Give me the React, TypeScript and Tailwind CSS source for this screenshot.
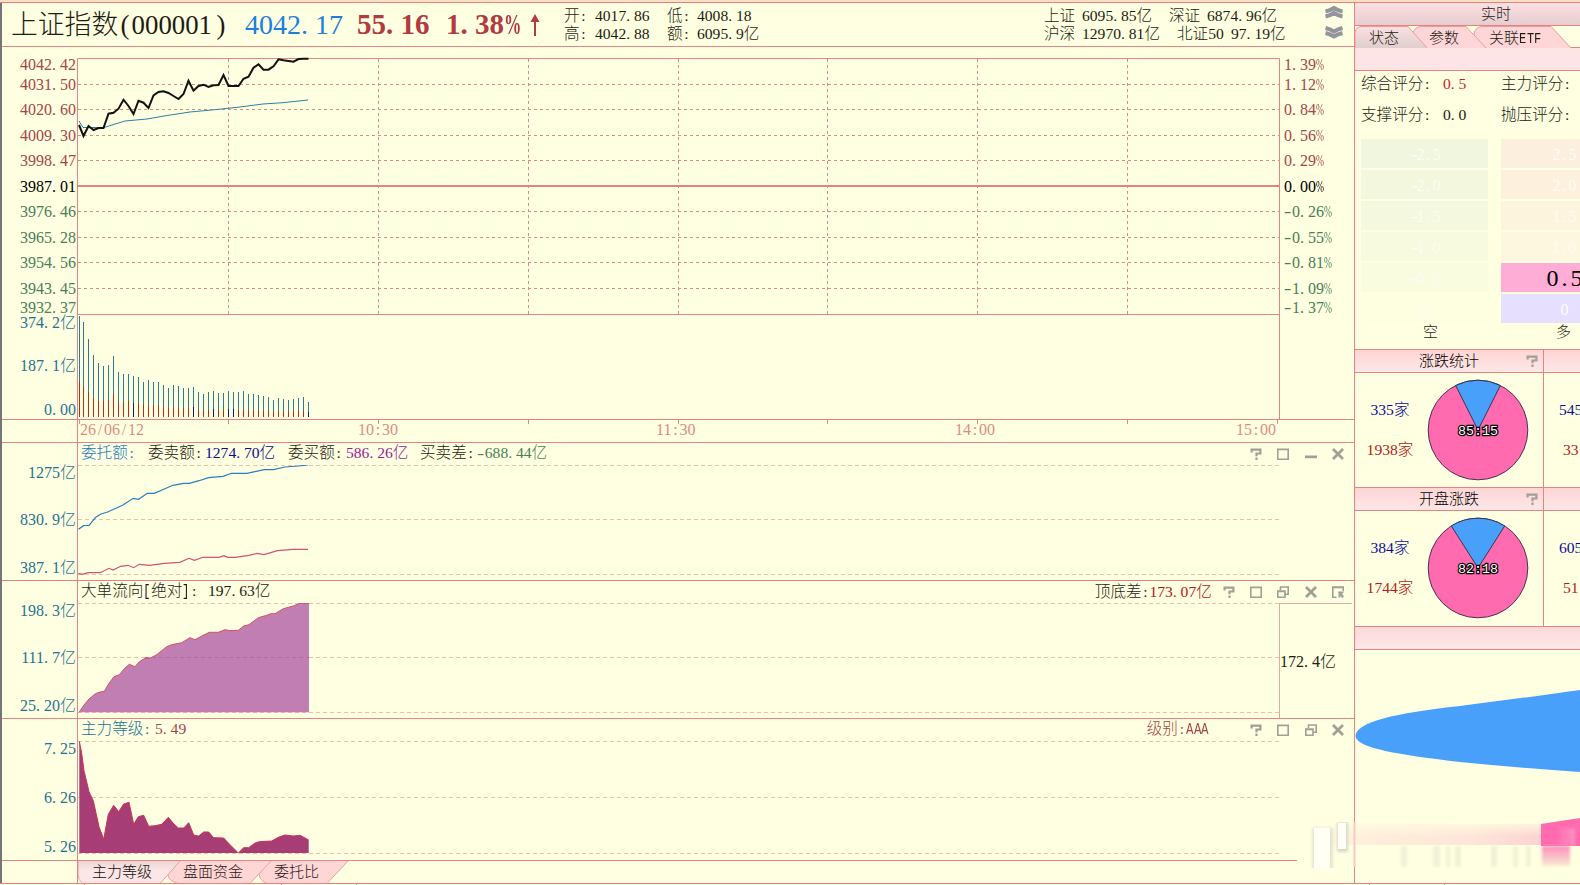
import { Fragment, ReactNode } from "react";
import clsx from "clsx";

type Label = { text: string; y: number; className?: string };
type Point = [number, number];

const RED = "text-[#a5464a]";
const GREEN = "text-[#4a7d5a]";
const TEAL = "text-[#1f7391]";

const leftLabels: Label[] = [
  { text: "4042.42", y: 65, className: RED },
  { text: "4031.50", y: 85, className: RED },
  { text: "4020.60", y: 110, className: RED },
  { text: "4009.30", y: 136, className: RED },
  { text: "3998.47", y: 161, className: RED },
  { text: "3987.01", y: 187, className: "text-black" },
  { text: "3976.46", y: 212, className: GREEN },
  { text: "3965.28", y: 238, className: GREEN },
  { text: "3954.56", y: 263, className: GREEN },
  { text: "3943.45", y: 289, className: GREEN },
  { text: "3932.37", y: 308, className: GREEN },
  { text: "374.2亿", y: 323, className: TEAL },
  { text: "187.1亿", y: 366, className: TEAL },
  { text: "0.00", y: 410, className: TEAL },
];

const rightLabels: Label[] = [
  { text: "1.39%", y: 65, className: RED },
  { text: "1.12%", y: 85, className: RED },
  { text: "0.84%", y: 110, className: RED },
  { text: "0.56%", y: 136, className: RED },
  { text: "0.29%", y: 161, className: RED },
  { text: "0.00%", y: 187, className: "text-black" },
  { text: "-0.26%", y: 212, className: GREEN },
  { text: "-0.55%", y: 238, className: GREEN },
  { text: "-0.81%", y: 263, className: GREEN },
  { text: "-1.09%", y: 289, className: GREEN },
  { text: "-1.37%", y: 308, className: GREEN },
];

const gridRows = [84, 109, 135, 160, 211, 237, 262, 288];
const gridCols = [228, 378, 528, 678, 827, 977, 1127];

const price = [
  125, 136, 126, 130, 128, 128, 113.7, 112.7, 108.7, 99.7, 106, 114, 100.7,
  102.7, 108, 95.3, 92, 91.3, 93, 96, 99, 94, 80.7, 90.7, 86, 84.7, 87, 85.3,
  85, 75, 86, 86, 86, 78.7, 76.7, 67.7, 64.3, 69.7, 69.7, 66.3, 59.3, 60.3, 61,
  61.7, 59, 58.7, 58.7,
];

const average =
  "79,121 83,127.5 104,127.5 125,121 147,119 167,115.5 190,112 217,109.5 240,107 263,104 283,102.7 308,100";

const volumes = [
  101, 95, 78, 62, 54, 51, 52, 61, 45, 43, 43, 41, 40, 35, 37, 35, 35, 32, 29,
  32, 31, 29, 29, 30, 25, 23, 25, 26, 24, 24, 26, 25, 25, 26, 23, 23, 22, 21,
  20, 17, 19, 18, 17, 18, 19, 20, 15,
];

const inner = [
  36, 30, 25, 19, 16, 16, 17, 23, 15, 15, 16, 14, 13, 12, 11, 12, 12, 10, 9, 10,
  9, 9, 9, 10, 7, 7, 7, 8, 7, 7, 8, 8, 7, 7, 6, 6, 6, 6, 6, 5, 6, 5, 5, 6, 6, 6,
  5,
];

const navyBars = [11, 23, 27, 30, 31, 46];

const sellLine =
  "78.5,529.3 83.5,525.7 89,525.3 95.7,517.3 101,514 107,512.3 114.8,508.7 122.5,505.3 133.2,498.3 138.5,499.3 147.3,493.3 154.2,493.3 168.4,487.3 173,485.3 183.7,483.3 189.4,483.3 199,480.7 208.6,477.7 223,476.3 231.5,473.3 246.8,473.3 264,469.7 273.6,469.7 285,467 298.5,466 308,465";
const buyLine =
  "78.5,573.3 82.3,574.3 88,572.7 100.3,572.7 109,568.3 113,570 120.6,566.3 128.2,565.3 133.6,567.7 139.3,564.3 149.3,565.3 164.6,563.3 179.9,562.3 189,558.3 194.4,560.3 202.8,557.3 218.9,557.3 223.9,555.7 227.7,557.3 235.4,557.3 248.8,555.3 257.2,553.3 264,554.7 277.5,550.7 292.8,549.3 308,549.3";
const flowLine =
  "79,712.3 84,705 89,699 95,694 99,692.3 104.3,691.3 109,683.3 114,676.7 119.3,674.7 125,668 129.3,664.3 135,666.7 139.3,661.7 145,658.3 150,658.3 156.7,654.7 166.7,646.7 171.7,644.7 181.7,642.7 190,637.7 195,639.7 201.7,636 209.3,632.3 218.3,632.3 225,629.7 230,630.7 238.3,630.3 243.7,626 249,624.7 258.3,617.7 266.7,615.3 270.7,613.7 275,613.7 283.3,608.7 293.3,606 300,603.3 309,603.3";
const levelLine =
  "79.3,741.3 81.7,753.3 84,770.7 89,791.7 93.3,800.7 99,826.7 103.7,839.3 108.3,814.3 113.7,805.3 118.7,811.7 123.7,804 129,802.3 133.7,824.3 138.3,816.7 143.7,815.3 148.7,826.3 155,825.7 161.7,824.3 168.3,817.3 173.3,823.3 178.3,828 183.7,828 188.7,822.7 193.7,835 198.7,836 203.7,832 208.7,832 213.7,837.7 223.7,838 230,844.7 238.3,853 243.7,847.7 248.7,847.7 255,843 259.3,841.7 271.7,841 278.3,837.3 285,835 293.3,836 300,835.3 308.7,840";

const minuteX = (i: number) => (i === 0 ? 79 : 78.5 + 5 * i);

// Half-width text: digits are already 0.5em wide, everything else is boxed to it.
const T = ({ children }: { children: string }) => (
  <>
    {children.split(/([.:()/\-]|[%A-Z[\]])/).map((part, i) => {
      if (/^[A-Z[\]]$/.test(part))
        return (
          <span
            key={i}
            className="inline-block w-[0.5em] origin-left scale-x-80 font-['Liberation_Mono',monospace] leading-none"
          >
            {part}
          </span>
        );
      if (part === "%")
        return (
          <span key={i} className="inline-block w-[0.5em] origin-left scale-x-60">
            {part}
          </span>
        );
      if (part === "-")
        return (
          <span key={i} className="inline-block w-[0.5em] origin-left scale-x-140">
            {part}
          </span>
        );
      if (/^[.:()/]$/.test(part))
        return (
          <span
            key={i}
            className={clsx(
              "inline-block w-[0.5em]",
              part === ")" && "text-right",
              /[:(/]/.test(part) && "text-center"
            )}
          >
            {part}
          </span>
        );
      return <Fragment key={i}>{part}</Fragment>;
    })}
  </>
);

const Axis = ({
  labels,
  top,
  className,
}: {
  labels: Label[];
  top: number;
  className?: string;
}) => (
  <div className={clsx("flex flex-col text-[16px] leading-[18px] whitespace-nowrap", className)}>
    {labels.map(({ text, y, className }, i) => {
      const prev = i === 0 ? top : labels[i - 1].y + 9;
      return (
        <span key={text} className={clsx("h-[18px] shrink-0", className)} style={{ marginTop: y - 9 - prev }}>
          <T>{text}</T>
        </span>
      );
    })}
  </div>
);

const HelpIcon = () => (
  <svg width="12" height="12" viewBox="0 0 12 12" fill="none" stroke="#a0a096" strokeWidth="2.2">
    <path d="M1.6 4.5V1.6H10.4V5.5H6.5V8.3M6.5 9.6V12" />
  </svg>
);

const MaxIcon = () => (
  <svg width="12" height="12" viewBox="0 0 12 12" fill="none" stroke="#a0a096" strokeWidth="1.6">
    <path d="M.8 1.5H11.2V11.2H.8ZM0 1.2H12" />
  </svg>
);

const MinIcon = () => (
  <svg width="12" height="12" viewBox="0 0 12 12">
    <path d="M0 7.5H12V10.2H0Z" fill="#a0a096" />
  </svg>
);

const RestoreIcon = () => (
  <svg width="12" height="12" viewBox="0 0 12 12" fill="none" stroke="#a0a096" strokeWidth="1.6">
    <path d="M3.5 4V1H11.2V8.2H8.5M.8 5H8V11.2H.8ZM.8 5.5H8" />
  </svg>
);

const CloseIcon = () => (
  <svg width="12" height="12" viewBox="0 0 12 12" stroke="#a0a096" strokeWidth="2.8">
    <path d="M1 1L11 11M11 1L1 11" />
  </svg>
);

const PopIcon = () => (
  <svg width="12" height="12" viewBox="0 0 12 12" fill="none" stroke="#a0a096" strokeWidth="1.6">
    <path d="M4.5 11.2H.8V1H11.2V5M0 1.5H12" />
    <path d="M6 6H11.5L9.5 7.8L11.5 10.5L10 11.5L8.5 9.5L7 11.5V6" fill="#a0a096" strokeWidth="1" />
  </svg>
);

const Toolbar = ({ children }: { children: ReactNode }) => (
  <div className="flex h-[22px] items-center gap-[15.3px] pr-2.5">{children}</div>
);

const DashedRows = ({ rows, to = 1279 }: { rows: number[]; to?: number }) => (
  <g stroke="#e9bfae" strokeDasharray="4 3">
    {rows.map((y) => (
      <path key={y} d={`M78 ${y}.5H${to}`} />
    ))}
  </g>
);

const Pane = ({
  labels,
  top,
  height,
  header,
  tools,
  side,
  children,
}: {
  labels: Label[];
  top: number;
  height: number;
  header: ReactNode;
  tools: ReactNode;
  side?: ReactNode;
  children: ReactNode;
}) => (
  <section className="flex shrink-0 border-b border-[#e98383]" style={{ height }}>
    <Axis labels={labels} top={top} className="w-[75px] shrink-0 items-end pr-px" />
    <div className="flex flex-1 flex-col border-l border-[#e98383]">
      <div className="flex h-[22px] items-start justify-between">
        <div className="flex pl-[3px] text-[15.6px] leading-[19px] whitespace-nowrap text-[#1c1c14]">
          {header}
        </div>
        <div className="flex text-[15.6px] leading-[22px]">{tools}</div>
      </div>
      <div className="flex flex-1">
        <svg
          className="w-[1201px] shrink-0"
          height={height - 23}
          viewBox={`78 ${top + 22} 1201 ${height - 23}`}
          fill="none"
        >
          {children}
        </svg>
        {side}
      </div>
    </div>
  </section>
);

const Pie = ({ share, label }: { share: number; label: string }) => {
  const a = share * Math.PI;
  const x = 49.8 * Math.sin(a);
  const y = 49.8 * Math.cos(a);
  return (
    <svg width="102" height="102" viewBox="-51 -51 102 102">
      <circle r="49.8" fill="#ff6bae" stroke="#493050" />
      <path d={`M0 0L${-x} ${-y}A49.8 49.8 0 0 1 ${x} ${-y}Z`} fill="#48a0fa" stroke="#3a3550" />
      <text
        y="5"
        textAnchor="middle"
        fill="#fff"
        stroke="#000"
        strokeWidth="2.5"
        paintOrder="stroke"
        className="font-['Liberation_Mono',monospace] text-[13.3px]"
      >
        {label}
      </text>
    </svg>
  );
};

const StatRow = ({
  title,
  down,
  up,
  share,
  ratio,
  nextDown,
  nextUp,
}: {
  title: string;
  down: string;
  up: string;
  share: number;
  ratio: string;
  nextDown: string;
  nextUp: string;
}) => (
  <div className="flex h-[138px] border-b border-[#e98383] text-[15.6px] leading-5 last:h-[139px]">
    <div className="w-[189px] shrink-0 border-r border-[#e98383]">
      <div className="flex h-[23px] items-center border-b border-[#e98383] bg-gradient-to-b from-[#ffd5d5] to-[#fde7e7]">
        <span className="flex-1 pl-16 text-[15px] whitespace-nowrap text-black">{title}</span>
        <span className="pr-[5px]">
          <HelpIcon />
        </span>
      </div>
      <div className="flex items-center pt-1.5">
        <div className="flex w-[62px] flex-col items-center gap-5 pl-2">
          <span className="text-[#0b0b9c]">{down}</span>
          <span className="text-[#b01c20]">{up}</span>
        </div>
        <div className="pl-[10px]">
          <Pie share={share} label={ratio} />
        </div>
      </div>
    </div>
    <div className="flex-1">
      <div className="h-[23px] border-b border-[#e98383] bg-gradient-to-b from-[#ffd5d5] to-[#fde7e7]" />
      <div className="flex flex-col gap-5 pt-[27px] pl-[15px]">
        <span className="text-[#0b0b9c]">{nextDown}</span>
        <span className="pl-1 text-[#b01c20]">{nextUp}</span>
      </div>
    </div>
  </div>
);

const bears = [
  { text: "-2.5", bg: "bg-[#f1f6de]" },
  { text: "-2.0", bg: "bg-[#f2f7de]" },
  { text: "-1.5", bg: "bg-[#f4f8df]" },
  { text: "-1.0", bg: "bg-[#f7fadf]" },
  { text: "-0.5", bg: "bg-[#f9fcdf]" },
  { text: "0", bg: "bg-[#fefee0]" },
];

const bulls = [
  { text: "2.5", bg: "bg-[#fcefdd]" },
  { text: "2.0", bg: "bg-[#fdf1dd]" },
  { text: "1.5", bg: "bg-[#fdf4de]" },
  { text: "1.0", bg: "bg-[#fef7df]" },
  { text: "0.5", bg: "bg-[#feaed6]" },
  { text: "0", bg: "bg-[#e6dffe]" },
];

const Header = () => (
  <header className="flex h-11 shrink-0 border-b border-[#e98383] text-[#1c1c14]">
    <div className="flex w-[560px] shrink-0 items-center whitespace-nowrap">
      <h1 className="w-[243px] shrink-0 pl-[9px] text-[26.8px] leading-10">
        <T>上证指数(000001)</T>
      </h1>
      <span className="w-[112px] text-[28px] text-[#1c7ee0]">
        <T>4042.17</T>
      </span>
      <span className="w-[89px] text-[29px] font-bold text-[#b23a42]">
        <T>55.16</T>
      </span>
      <span className="w-[84px] text-[29px] font-bold text-[#b23a42]">
        <T>1.38%</T>
      </span>
      <svg width="10" height="22" viewBox="0 0 10 22" fill="#b23a42">
        <path d="M5 0L9.5 8H6V22H4V8H.5Z" />
      </svg>
    </div>
    <div className="flex w-[479px] shrink-0 flex-col pt-[4px] pl-[2px] text-[15.6px] leading-[18px] whitespace-nowrap">
      <div className="flex">
        <span className="w-[31px]"><T>开:</T></span>
        <span className="w-[72px]"><T>4017.86</T></span>
        <span className="w-[30px]"><T>低:</T></span>
        <span><T>4008.18</T></span>
      </div>
      <div className="flex">
        <span className="w-[31px]"><T>高:</T></span>
        <span className="w-[72px]"><T>4042.88</T></span>
        <span className="w-[30px]"><T>额:</T></span>
        <span><T>6095.9亿</T></span>
      </div>
    </div>
    <div className="flex w-[280px] shrink-0 flex-col pt-[4px] pl-[3px] text-[15.6px] leading-[18px] whitespace-nowrap">
      <div className="flex">
        <span className="w-[38px]">上证</span>
        <span className="w-[87px]"><T>6095.85亿</T></span>
        <span className="w-[38px]">深证</span>
        <span><T>6874.96亿</T></span>
      </div>
      <div className="flex">
        <span className="w-[38px]">沪深</span>
        <span className="w-[95px]"><T>12970.81亿</T></span>
        <span className="w-[54px]">北证50</span>
        <span><T>97.19亿</T></span>
      </div>
    </div>
    <svg className="mt-[2px] ml-[3px]" width="20" height="34" viewBox="0 0 20 34" fill="none" stroke="#94949e" strokeWidth="4">
      <path d="M1.5 6.5Q6 5.5 10 3Q14 5.5 18.5 6.5M1.5 11.5Q6 10.5 10 8Q14 10.5 18.5 11.5" />
      <path d="M1.5 23Q6 24 10 26.5Q14 24 18.5 23M1.5 28Q6 29 10 31.5Q14 29 18.5 28" />
    </svg>
  </header>
);

const PriceChart = () => {
  const points: Point[] = price.map((y, i) => [minuteX(i), y]);
  return (
    <section className="flex h-[373px] shrink-0 border-b border-[#e98383]">
      <Axis labels={leftLabels} top={47} className="w-[75px] shrink-0 items-end pr-px" />
      <svg className="shrink-0" width="1203" height="372" viewBox="77 47 1203 372" fill="none">
        <g stroke="#d98d80" strokeDasharray="3 3">
          {gridRows.map((y) => (
            <path key={y} d={`M78 ${y}.5H1279`} />
          ))}
          {gridCols.map((x) => (
            <path key={x} d={`M${x}.5 59V314`} />
          ))}
        </g>
        <path d="M77.5 419V58.5H1279.5V419M77 314.5H1280" stroke="#e98383" />
        <path d="M78 186H1279" stroke="#de8484" strokeWidth="2" />
        <polyline points={average} stroke="#2a83a5" />
        <polyline points={points.join(" ")} stroke="#111" strokeWidth="2" />
        <g shapeRendering="crispEdges">
          {volumes.map((v, i) => {
            const x = Math.floor(minuteX(i));
            return (
              <Fragment key={i}>
                <rect x={x} y={417 - v} width="1" height={v} fill="#2b7c8c" />
                <rect
                  x={x}
                  y={417 - inner[i]}
                  width="1"
                  height={inner[i]}
                  fill={navyBars.includes(i) ? "#12128c" : "#bf2a12"}
                />
              </Fragment>
            );
          })}
        </g>
      </svg>
      <Axis labels={rightLabels} top={47} className="pl-1" />
    </section>
  );
};

const TimeAxis = () => (
  <div className="flex h-[23px] shrink-0 border-b border-[#e98383] text-[16px] leading-[20px] text-[#dc8c84]">
    <div className="w-[75px] shrink-0" />
    <div className="flex flex-1 border-l border-[#e98383]">
      <svg className="absolute" width="1203" height="5" viewBox="78 0 1203 5" stroke="#e98383">
        {[79, ...gridCols, 1277].map((x) => (
          <path key={x} d={`M${x}.5 0V4`} />
        ))}
      </svg>
      <span className="w-[280px] pl-0.5"><T>26/06/12</T></span>
      <span className="w-[298px]"><T>10:30</T></span>
      <span className="w-[299px]"><T>11:30</T></span>
      <span className="w-[281px]"><T>14:00</T></span>
      <span><T>15:00</T></span>
    </div>
  </div>
);

const BottomTabs = () => (
  <div className="flex h-[22px] shrink-0 text-[15px] leading-[23px]">
    <div className="w-[75px] shrink-0" />
    <div className="relative flex-1 border-l border-[#e98383]">
      <svg className="absolute top-0 left-0" width="275" height="22" viewBox="78 0 275 22" stroke="#eba2a2">
        <defs>
          <linearGradient id="tab" x2="0" y2="1">
            <stop offset="0" stopColor="#ead6d6" />
            <stop offset="0.5" stopColor="#fde6e6" />
          </linearGradient>
        </defs>
        <path d="M256 -1H349L327 22.5H267Q260 20 259 13Q261 8 272 -1" fill="#ffd6d6" />
        <path d="M165 -1H272L250 22.5H178Q169 20 168 14Q171 8 180 -1" fill="#ffd6d6" />
        <path d="M78 -1H181L160 22.5H83Q78 19 78 14Z" fill="url(#tab)" />
      </svg>
      <div className="relative flex text-[#2a1818]">
        <span className="w-[91px] pl-[14px] text-[#14100c]">主力等级</span>
        <span className="w-[91px] pl-[14px]">盘面资金</span>
        <span className="pl-[14px]">委托比</span>
      </div>
    </div>
  </div>
);

const SidePanel = () => (
  <aside className="flex w-[226px] shrink-0 flex-col overflow-hidden border-l border-[#e98383] text-[#1c1c14]">
    <div className="flex h-[23px] shrink-0 items-center border-b border-[#e98383] bg-gradient-to-b from-[#ffdfe2] to-[#e4cdd0] pl-[126px] text-[15px]">
      实时
    </div>
    <div className="relative h-[22px] shrink-0 border-b border-[#e98383] text-[15px] leading-6">
      <svg className="absolute top-0 left-0" width="225" height="22" viewBox="1355 0 225 22" stroke="#eb9c9c">
        <defs>
          <linearGradient id="active" x2="0" y2="1">
            <stop offset="0" stopColor="#fbdfe0" />
            <stop offset="1" stopColor="#dfcdcd" />
          </linearGradient>
        </defs>
        <path d="M1474 23V8Q1475 1 1482 .5H1551L1572 23Z" fill="#ffd6d8" />
        <path d="M1413 23V8Q1414 1 1421 .5H1466L1487 23Z" fill="#ffd6d8" />
        <path d="M1355 23V6Q1356 1 1361 .5H1408L1428 23Z" fill="url(#active)" />
      </svg>
      <div className="relative flex pl-[14px]">
        <span className="w-[60px]">状态</span>
        <span className="w-[60px]">参数</span>
        <span><T>关联ETF</T></span>
      </div>
    </div>
    <div className="h-[23px] shrink-0 border-b border-[#e98383] bg-[#fee5e5]" />
    <div className="grid h-[68px] w-[285px] shrink-0 grid-cols-[82px_58px_1fr] content-start gap-y-[9px] pt-[2px] pl-1.5 text-[15.6px] leading-[22px] whitespace-nowrap">
      <span><T>综合评分:</T></span>
      <span className="text-[#c81e28]"><T>0.5</T></span>
      <span><T>主力评分:</T></span>
      <span><T>支撑评分:</T></span>
      <span><T>0.0</T></span>
      <span><T>抛压评分:</T></span>
    </div>
    <div className="flex gap-[13px] pl-1.5">
      <div className="flex w-[127px] shrink-0 flex-col gap-0.5">
        {bears.map(({ text, bg }) => (
          <div key={text} className={clsx("h-[29px] text-center text-[16px] leading-[32px] text-[#fcfdf4]", bg)}>
            <T>{text}</T>
          </div>
        ))}
      </div>
      <div className="flex w-[127px] shrink-0 flex-col gap-0.5">
        {bulls.map(({ text, bg }) => (
          <div
            key={text}
            className={clsx(
              "h-[29px] text-center",
              text === "0.5" ? "text-[24px] leading-[31px] text-black" : "text-[16px] leading-[32px] text-[#fefcf4]",
              bg
            )}
          >
            <T>{text}</T>
          </div>
        ))}
      </div>
    </div>
    <div className="flex h-[27px] shrink-0 border-b border-[#e98383] text-[15px] leading-[18px]">
      <span className="w-[134px] pl-[68px]">空</span>
      <span className="pl-[67px]">多</span>
    </div>
    <div>
      <StatRow title="涨跌统计" down="335家" up="1938家" share={0.148} ratio="85:15" nextDown="545" nextUp="33" />
      <StatRow title="开盘涨跌" down="384家" up="1744家" share={0.18} ratio="82:18" nextDown="605" nextUp="51" />
    </div>
    <div className="h-[23px] shrink-0 border-b border-[#e98383] bg-gradient-to-b from-[#fdd9d9] to-[#fde7e7]" />
    <svg width="225" height="233" viewBox="1355 650 225 233">
      <path
        d="M1355.5 736C1356 722 1395 713 1460 706Q1530 697 1580 690V772Q1520 768 1460 762C1400 755 1356 748 1355.5 736Z"
        fill="#48a0fa"
      />
      <path d="M1541 824Q1560 821 1580 818V846H1541Z" fill="#ff6bae" />
    </svg>
  </aside>
);

// Smeared patch over the lower right corner
const Smear = () => (
  <div className="absolute top-[822px] left-[1296px] h-[46px] w-[284px]">
    <svg width="284" height="46" viewBox="1296 822 284 46">
      <defs>
        <linearGradient id="smear">
          <stop offset="0" stopColor="#ffeedb" stopOpacity="0" />
          <stop offset="0.25" stopColor="#ffeedb" />
          <stop offset="0.7" stopColor="#fee6d8" />
          <stop offset="1" stopColor="#fcd3d0" />
        </linearGradient>
        <linearGradient id="rowfade" x2="0" y2="1">
          <stop offset="0" stopColor="#ffffe1" />
          <stop offset="0.6" stopColor="#ffffe1" stopOpacity="0" />
        </linearGradient>
        <linearGradient id="pinkfade">
          <stop offset="0.4" stopColor="#ff8cc0" stopOpacity="0" />
          <stop offset="1" stopColor="#ff93c2" />
        </linearGradient>
        <linearGradient id="fade" x2="0" y2="1">
          <stop offset="0" stopColor="#ff8cbc" />
          <stop offset="1" stopColor="#f6ead2" />
        </linearGradient>
        <filter id="soft" x="-50%" y="-50%" width="200%" height="200%">
          <feGaussianBlur stdDeviation="1.5" />
        </filter>
      </defs>
      <rect x="1310" y="824" width="231" height="21" fill="url(#smear)" />
      <rect x="1310" y="824" width="231" height="21" fill="url(#rowfade)" opacity="0.7" />
      <rect x="1545" y="828" width="30" height="18" fill="url(#pinkfade)" filter="url(#soft)" />
      <rect x="1297" y="846" width="283" height="21" fill="#ffffe1" />
      <rect x="1542" y="846" width="28" height="20" fill="url(#fade)" filter="url(#soft)" />
      <g fill="#f1f1d7" filter="url(#soft)">
        <rect x="1401" y="846" width="6" height="21" />
        <rect x="1433" y="846" width="7" height="21" />
        <rect x="1446" y="846" width="4" height="21" />
        <rect x="1455" y="846" width="6" height="21" />
        <rect x="1491" y="846" width="6" height="21" />
        <rect x="1513" y="846" width="5" height="21" />
        <rect x="1526" y="846" width="5" height="21" />
      </g>
      <path d="M1354.5 822V867" stroke="#f9c8c0" strokeWidth="2" />
      <g fill="#d8d8c6" filter="url(#soft)">
        <rect x="1312" y="828" width="21" height="41" opacity="0.7" />
        <rect x="1337" y="822" width="11" height="30" />
      </g>
      <rect x="1314" y="828" width="16" height="40" fill="#fffff4" />
      <rect x="1338" y="823" width="8" height="26" fill="#fffff8" />
    </svg>
  </div>
);

export default function App() {
  return (
    <div className="relative flex h-[885px] w-[1580px] flex-col overflow-hidden bg-[#ffffe1] font-['Liberation_Serif','Noto_Sans_CJK_SC',serif] font-light">
      <div className="h-[3px] shrink-0 border-b border-[#e98383] bg-[#f7dfc4]" />
      <div className="flex h-[881px] shrink-0 border-b border-[#e98383]">
        <main className="flex w-[1354px] shrink-0 flex-col border-l-2 border-[#74747c]">
          <Header />
          <PriceChart />
          <TimeAxis />
          <Pane
            top={443}
            height={138}
            labels={[
              { text: "1275亿", y: 473, className: TEAL },
              { text: "830.9亿", y: 520, className: TEAL },
              { text: "387.1亿", y: 568, className: TEAL },
            ]}
            header={
              <>
                <span className="w-[67px] text-[#1c7ac0]"><T>委托额:</T></span>
                <span className="w-[57px]"><T>委卖额:</T></span>
                <span className="w-[83px] text-[#0b0b90]"><T>1274.70亿</T></span>
                <span className="w-[58px]"><T>委买额:</T></span>
                <span className="w-[74px] text-[#9a1a9a]"><T>586.26亿</T></span>
                <span className="w-[57px]"><T>买卖差:</T></span>
                <span className="text-[#4a7d5a]"><T>-688.44亿</T></span>
              </>
            }
            tools={
              <Toolbar>
                <HelpIcon />
                <MaxIcon />
                <MinIcon />
                <CloseIcon />
              </Toolbar>
            }
          >
            <DashedRows rows={[465, 519, 574]} />
            <polyline points={sellLine} stroke="#2781c0" strokeWidth="1.2" />
            <polyline points={buyLine} stroke="#cf5278" strokeWidth="1.2" />
          </Pane>
          <Pane
            top={581}
            height={138}
            labels={[
              { text: "198.3亿", y: 611, className: TEAL },
              { text: "111.7亿", y: 658, className: TEAL },
              { text: "25.20亿", y: 706, className: TEAL },
            ]}
            header={
              <>
                <span className="w-[127px]"><T>大单流向[绝对]:</T></span>
                <span><T>197.63亿</T></span>
              </>
            }
            tools={
              <>
                <span className="pr-[11px] whitespace-nowrap text-[#1c1c14]">
                  <T>顶底差:</T>
                  <span className="text-[#b8141e]"><T>173.07亿</T></span>
                </span>
                <Toolbar>
                  <HelpIcon />
                  <MaxIcon />
                  <RestoreIcon />
                  <CloseIcon />
                  <PopIcon />
                </Toolbar>
              </>
            }
            side={
              <div className="w-[73px] border-t border-l border-[#e5a99f] pt-[47px] text-[16px] leading-[22px] whitespace-nowrap text-[#1c1c14]">
                <T>172.4亿</T>
              </div>
            }
          >
            <DashedRows rows={[603, 657, 712]} />
            <polygon points={`${flowLine} 309,712.3`} fill="#c07eb2" />
            <polyline points={flowLine} stroke="#d94e66" />
            <path d="M145 657.5H309" stroke="#b56a9a" strokeDasharray="4 3" />
          </Pane>
          <Pane
            top={719}
            height={142}
            labels={[
              { text: "7.25", y: 749, className: TEAL },
              { text: "6.26", y: 798, className: TEAL },
              { text: "5.26", y: 847, className: TEAL },
            ]}
            header={
              <>
                <span className="w-[74px] text-[#1f7391]"><T>主力等级:</T></span>
                <span className="text-[#a5464a]"><T>5.49</T></span>
              </>
            }
            tools={
              <>
                <span className="pr-[41px] leading-[20px] whitespace-nowrap text-[#a5464a]">
                  <T>级别:AAA</T>
                </span>
                <Toolbar>
                  <HelpIcon />
                  <MaxIcon />
                  <RestoreIcon />
                  <CloseIcon />
                </Toolbar>
              </>
            }
          >
            <DashedRows rows={[741, 797, 853]} />
            <polygon points={`${levelLine} 308.7,853 79.3,853`} fill="#a63d74" />
            <polyline points={levelLine} stroke="#d03058" />
          </Pane>
          <BottomTabs />
        </main>
        <SidePanel />
      </div>
      <svg className="shrink-0" width="1580" height="1" viewBox="0 0 1580 1" fill="#e98383">
        {[84, 281, 356, 1369, 1444].map((x) => (
          <rect key={x} x={x} width="1" height="1" />
        ))}
      </svg>
      <Smear />
    </div>
  );
}
